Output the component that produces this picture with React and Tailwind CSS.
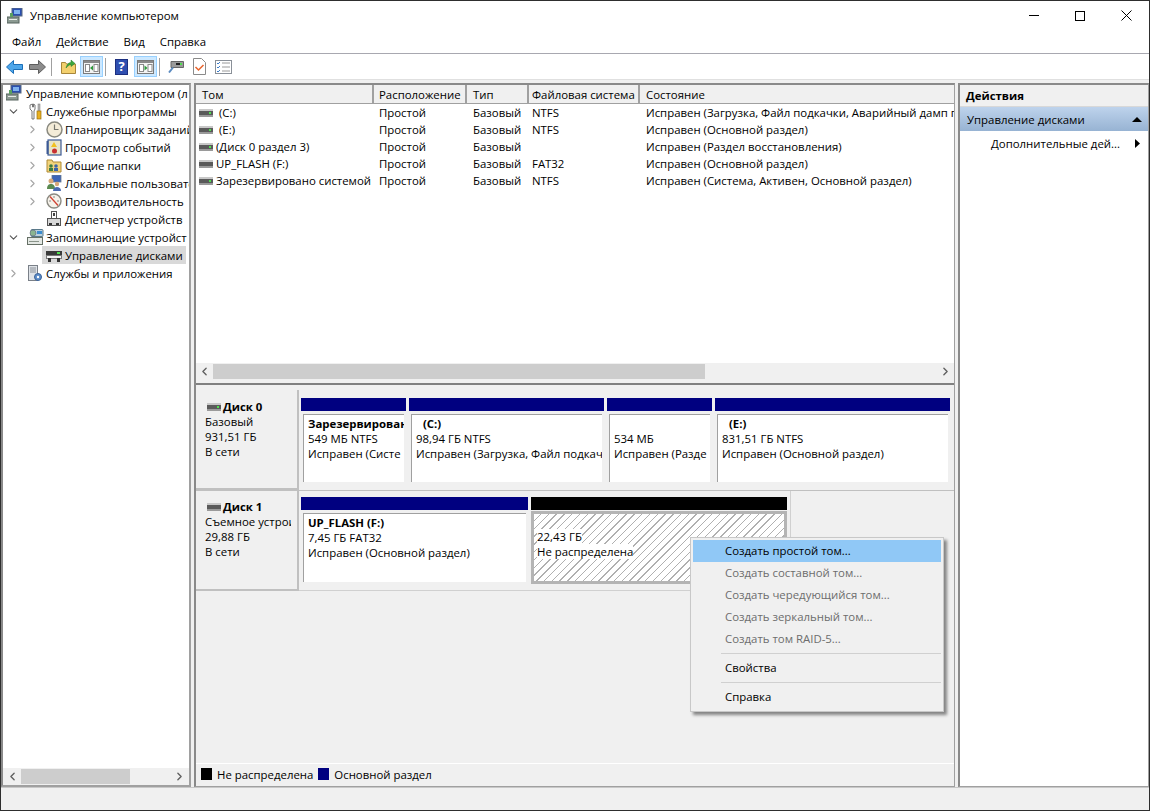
import React from 'react'
import { ChevronDown, ChevronLeft, ChevronRight } from 'lucide-react'

const FONT = "font-['Open_Sans','Noto_Sans',sans-serif]"

// icons
const DriveIcon = ({ flash }) => (
  <svg width="14" height="8" viewBox="0 0 14 8" className="shrink-0">
    <rect x="0" y="0" width="14" height="2" fill="#c8c8c8" />
    <rect x="0" y="2" width="14" height="4" fill="#5a5a5a" />
    <rect x="0" y="6" width="14" height="2" fill="#9a9a9a" />
    {!flash && <rect x="10" y="3" width="2" height="2" fill="#4fe04f" />}
  </svg>
)

const ComputerIcon = () => (
  <svg width="16" height="16" viewBox="0 0 16 16" className="shrink-0">
    <rect x="5" y="0" width="10" height="8" fill="#2a4fb0" stroke="#5a6a80" strokeWidth="1" />
    <rect x="7" y="2" width="6" height="4" fill="#7fb2ee" />
    <rect x="0" y="9" width="12" height="6" fill="#8c9a92" stroke="#55625c" strokeWidth="1" />
    <rect x="2" y="11" width="8" height="1" fill="#e8ece8" />
    <rect x="3" y="5" width="3" height="4" fill="#5aa060" />
  </svg>
)

const ToolsIcon = () => (
  <svg width="16" height="17" viewBox="0 0 16 17" className="shrink-0">
    <path d="M3 2v4l2 2v8h2V8l1-2V2L6.500 1v3h-1V1z" fill="#fff" stroke="#6a6a6a" strokeWidth="0.9" />
    <rect x="11" y="1" width="2" height="8" fill="#b8b8b8" stroke="#777" strokeWidth="0.5" />
    <rect x="10" y="8" width="4" height="8" fill="#e8b020" stroke="#9a7010" strokeWidth="0.7" />
  </svg>
)

const ClockIcon = () => (
  <svg width="17" height="17" viewBox="0 0 17 17" className="shrink-0">
    <circle cx="8.500" cy="8.500" r="7.500" fill="#f4ecd8" stroke="#8a8a80" strokeWidth="1.500" />
    <path d="M8.500 3.500v5h4" fill="none" stroke="#77776e" strokeWidth="1.200" />
  </svg>
)

const EventIcon = () => (
  <svg width="16" height="17" viewBox="0 0 16 17" className="shrink-0">
    <rect x="2" y="1" width="13" height="15" fill="#e8e4c8" stroke="#3c5a96" strokeWidth="1.200" />
    <rect x="0.500" y="2" width="2" height="13" fill="#3c5a96" />
    <path d="M8 3l3 5H5z" fill="#f0c020" />
    <circle cx="8.500" cy="12" r="2.500" fill="#c83030" />
  </svg>
)

const SharedIcon = () => (
  <svg width="16" height="16" viewBox="0 0 16 16" className="shrink-0">
    <path d="M1 3h5l1 2h8v10H1z" fill="#f2d47c" stroke="#b08a34" strokeWidth="1" />
    <circle cx="5" cy="9" r="1.800" fill="#3c7c44" />
    <rect x="3" y="11" width="4" height="3" fill="#3c7c44" />
    <circle cx="10" cy="9" r="1.800" fill="#3c64a8" />
    <rect x="8" y="11" width="4" height="3" fill="#3c64a8" />
  </svg>
)

const UsersIcon = () => (
  <svg width="16" height="16" viewBox="0 0 16 16" className="shrink-0">
    <rect x="6" y="0" width="9" height="7" fill="#3c64b8" stroke="#6a7a90" strokeWidth="0.8" />
    <circle cx="5" cy="6" r="2.500" fill="#d8a878" />
    <path d="M1 14c0-4 2-5 4-5s4 1 4 5z" fill="#5a8a50" />
    <circle cx="11" cy="9" r="2.200" fill="#d8a878" />
    <path d="M7 16c0-3 2-4 4-4s4 1 4 4z" fill="#4a6ab0" />
  </svg>
)

const PerfIcon = () => (
  <svg width="16" height="16" viewBox="0 0 16 16" className="shrink-0">
    <circle cx="8" cy="8" r="7" fill="#f6f2ea" stroke="#8a8a82" strokeWidth="1.400" />
    <path d="M4 3.500l8 9" stroke="#d04030" strokeWidth="1.300" />
    <path d="M8 3v2M3 8h2M11 8h2" stroke="#707070" strokeWidth="0.800" />
  </svg>
)

const DeviceIcon = () => (
  <svg width="14" height="16" viewBox="0 0 14 16" className="shrink-0">
    <rect x="4.500" y="0.500" width="5" height="7" fill="#fff" stroke="#555" />
    <rect x="6" y="2" width="2" height="3" fill="#444" />
    <rect x="0.500" y="7.500" width="13" height="7" fill="#d8d8d8" stroke="#555" />
    <rect x="2" y="12" width="3" height="2" fill="#333" />
    <rect x="9" y="12" width="3" height="2" fill="#333" />
  </svg>
)

const StorageIcon = () => (
  <svg width="17" height="17" viewBox="0 0 17 17" className="shrink-0">
    <rect x="4" y="0.500" width="12" height="7" rx="1" fill="#bcd0dc" stroke="#5a7a8a" />
    <rect x="10" y="2" width="5" height="3" fill="#3c8cd0" />
    <circle cx="6" cy="4" r="3" fill="#8ab490" stroke="#557" strokeWidth="0.500" />
    <rect x="0.500" y="8.500" width="15" height="7" fill="#e4e8e4" stroke="#667066" />
    <rect x="2" y="12" width="10" height="1" fill="#8a948a" />
  </svg>
)

const DiskMgmtIcon = () => (
  <svg width="16" height="13" viewBox="0 0 16 13" className="shrink-0">
    <rect x="0" y="0" width="16" height="2" fill="#dcdcdc" />
    <rect x="0" y="2" width="16" height="4" fill="#3a3a3a" />
    <rect x="11" y="3" width="3" height="2" fill="#50e050" />
    <rect x="0.500" y="6.500" width="15" height="3" fill="#f4f4f4" stroke="#777" />
    <rect x="2" y="9" width="3" height="4" fill="#333" />
    <rect x="11" y="9" width="3" height="4" fill="#333" />
  </svg>
)

const ServicesIcon = () => (
  <svg width="16" height="17" viewBox="0 0 16 17" className="shrink-0">
    <rect x="1.500" y="0.500" width="9" height="15" fill="#dfe3e8" stroke="#7a8088" />
    <path d="M3 3h6M3 5h6M3 7h6" stroke="#8a9098" />
    <circle cx="11" cy="12" r="3.500" fill="#5c8cc8" stroke="#3a6298" />
    <circle cx="11" cy="12" r="1.200" fill="#fff" />
  </svg>
)

const PaneIcon = ({ right }) => (
  <svg width="17" height="14" viewBox="0 0 17 14">
    <rect x="0.500" y="0.500" width="16" height="13" fill="#f4f4f4" stroke="#7a7a7a" />
    <rect x="1" y="1" width="15" height="2" fill="#8a8a8a" />
    <rect x="2.500" y="4.500" width="4" height="7" fill="#fff" stroke="#8a8a8a" />
    <rect x="11" y="4.500" width="4" height="7" fill="#fff" stroke="#8a8a8a" />
    {right ? <path d="M7.500 5.500l3 2.500-3 2.500z" fill="#2f9a3c" /> : <path d="M10 5.500l-3 2.500 3 2.500z" fill="#2f9a3c" />}
  </svg>
)

const Sep = () => <div className="w-px h-[18px] bg-[#a0a0a0]" />

const HotButton = ({ children }) => (
  <div className="w-[23px] h-[21px] flex items-center justify-center bg-[#cce8ff] border border-[#99d1ff]">{children}</div>
)

function Toolbar() {
  return (
    <div className="h-[25px] flex items-center bg-white pl-[5px]">
      <svg width="17" height="14" viewBox="0 0 17 14">
        <path d="M7.500 0.500L0.500 7l7 6.500V9.500h9v-5h-9z" fill="#4da6ea" stroke="#1c6fb8" />
      </svg>
      <svg width="17" height="14" viewBox="0 0 17 14" className="ml-[6px]">
        <path d="M9.500 0.500L16.500 7l-7 6.500V9.500h-9v-5h9z" fill="#8c8c8c" stroke="#5e5e5e" />
      </svg>
      <div className="ml-[5px]"><Sep /></div>
      <svg width="15" height="15" viewBox="0 0 15 15" className="ml-[9px]">
        <path d="M0.500 3.500h4l1 1.500h9v9.500H0.500z" fill="#f3d06e" stroke="#a8863a" />
        <path d="M5 9C6 5 8 3.500 10 3.500V1l4 3.500-4 3V5.500C8.500 5.500 7 7 5 9z" fill="#3da83d" stroke="#22782a" strokeWidth="0.500" />
      </svg>
      <div className="ml-[4px]"><HotButton><PaneIcon /></HotButton></div>
      <div className="ml-[2px]"><Sep /></div>
      <div className="ml-[9px] w-[13px] h-[16px] flex items-center justify-center bg-[#2f4fb0] border border-[#1c2f80] text-white font-bold text-[13px] leading-none">?</div>
      <div className="ml-[6px]"><HotButton><PaneIcon right /></HotButton></div>
      <div className="ml-[2px]"><Sep /></div>
      <svg width="16" height="12" viewBox="0 0 16 12" className="ml-[8px]">
        <path d="M3 0.500h12.500v6H3z" fill="#9a9a9a" stroke="#666" />
        <rect x="8" y="2" width="6" height="2" fill="#222" />
        <rect x="12" y="2" width="2" height="2" fill="#4fe04f" />
        <path d="M5 6.500l-4 5" stroke="#5a8ac0" strokeWidth="2" />
      </svg>
      <svg width="13" height="17" viewBox="0 0 13 17" className="ml-[9px]">
        <path d="M0.500 0.500h8l4 4v12H0.500z" fill="#fff" stroke="#8a8a8a" />
        <path d="M2.500 9l3 3 5-5" fill="none" stroke="#e8642c" strokeWidth="1.500" />
      </svg>
      <svg width="17" height="14" viewBox="0 0 17 14" className="ml-[9px]">
        <rect x="0.500" y="0.500" width="16" height="13" fill="#fff" stroke="#8a9098" />
        <path d="M2 3l1 1 2-2M2 7l1 1 2-2M2 11l1 1 2-2" fill="none" stroke="#3c7cc8" />
        <path d="M7 3h8M7 7h8M7 11h8" stroke="#9a9a9a" />
      </svg>
    </div>
  )
}

const Arrow = ({ open }) =>
  open ? (
    <ChevronDown size={13} strokeWidth={2} className="text-[#555] shrink-0" />
  ) : (
    <ChevronRight size={13} strokeWidth={2} className="text-[#a6a6a6] shrink-0" />
  )

function TreeRow({ level, arrow, open, icon, label, selected }) {
  const pad = level === 0 ? 'pl-[3px]' : level === 1 ? 'pl-[4px]' : 'pl-[23px]'
  const inner = selected ? 'ml-[3px] pl-[4px] pr-[3px] bg-[#d9d9d9]' : level > 0 ? 'ml-[7px]' : ''
  return (
    <div className={`h-[18px] flex items-center ${pad} whitespace-nowrap`}>
      {level > 0 && <div className="w-[13px] flex justify-center shrink-0">{arrow && <Arrow open={open} />}</div>}
      <div className={`flex items-center h-[18px] ${inner}`}>
        <div className="w-[16px] flex justify-center shrink-0">{icon}</div>
        <span className={level === 0 ? 'ml-[4px]' : 'ml-[3px]'}>{label}</span>
      </div>
    </div>
  )
}

function Scroll({ thumbClass, leftPad }) {
  return (
    <div className={`h-[17px] flex items-center bg-[#f0f0f0] ${leftPad}`}>
      <ChevronLeft size={13} strokeWidth={2.500} className="text-[#606060] shrink-0" />
      <div className="flex-1 h-[15px] mx-[2px]">
        <div className={`h-full bg-[#cdcdcd] ${thumbClass}`} />
      </div>
      <ChevronRight size={13} strokeWidth={2.500} className="text-[#606060] shrink-0" />
    </div>
  )
}

function TreePanel() {
  return (
    <div className="w-[190px] shrink-0 h-full bg-white border-2 border-[#a0a0a0] border-t-[#8a8a8a] border-l-[#8a8a8a] flex flex-col overflow-hidden">
      <div className="flex-1 -mt-[1px]">
        <TreeRow level={0} icon={<ComputerIcon />} label="Управление компьютером (л" />
        <TreeRow level={1} arrow open icon={<ToolsIcon />} label="Служебные программы" />
        <TreeRow level={2} arrow icon={<ClockIcon />} label="Планировщик заданий" />
        <TreeRow level={2} arrow icon={<EventIcon />} label="Просмотр событий" />
        <TreeRow level={2} arrow icon={<SharedIcon />} label="Общие папки" />
        <TreeRow level={2} arrow icon={<UsersIcon />} label="Локальные пользовате" />
        <TreeRow level={2} arrow icon={<PerfIcon />} label="Производительность" />
        <TreeRow level={2} icon={<DeviceIcon />} label="Диспетчер устройств" />
        <TreeRow level={1} arrow open icon={<StorageIcon />} label="Запоминающие устройст" />
        <TreeRow level={2} icon={<DiskMgmtIcon />} label="Управление дисками" selected />
        <TreeRow level={1} arrow icon={<ServicesIcon />} label="Службы и приложения" />
      </div>
      <Scroll thumbClass="w-[109px]" leftPad="px-[3px]" />
    </div>
  )
}

const columns = ['Том', 'Расположение', 'Тип', 'Файловая система', 'Состояние']
const colW = ['w-[178px]', 'w-[93px]', 'w-[62px]', 'w-[111px]', 'flex-1']
const headPad = ['pl-[6px]', 'pl-[5px]', 'pl-[6px]', 'pl-[3px]', 'pl-[6px]']

const rows = [
  { vol: '(C:)', gap: true, type: 'Базовый', fs: 'NTFS', state: 'Исправен (Загрузка, Файл подкачки, Аварийный дамп п' },
  { vol: '(E:)', gap: true, type: 'Базовый', fs: 'NTFS', state: 'Исправен (Основной раздел)' },
  { vol: '(Диск 0 раздел 3)', type: 'Базовый', fs: '', state: 'Исправен (Раздел восстановления)' },
  { vol: 'UP_FLASH (F:)', flash: true, type: 'Базовый', fs: 'FAT32', state: 'Исправен (Основной раздел)' },
  { vol: 'Зарезервировано системой', type: 'Базовый', fs: 'NTFS', state: 'Исправен (Система, Активен, Основной раздел)' },
]

function VolumeList() {
  return (
    <div className="h-[295px] bg-white flex flex-col">
      <div className="h-[19px] flex bg-[#f0f0f0] border-b border-[#a0a0a0] shrink-0">
        {columns.map((c, i) => (
          <div key={c} className={`${colW[i]} h-full border-r-2 border-[#a0a0a0] last:border-r-0 ${headPad[i]} leading-[19px] overflow-hidden whitespace-nowrap`}>
            {c}
          </div>
        ))}
      </div>
      <div className="flex-1">
        {rows.map((r) => (
          <div key={r.vol} className="h-[17px] flex items-center whitespace-nowrap">
            <div className={`${colW[0]} flex items-center pl-[3px] overflow-hidden`}>
              <DriveIcon flash={r.flash} />
              <span className={r.gap ? 'ml-[6px]' : 'ml-[3px]'}>{r.vol}</span>
            </div>
            <div className={`${colW[1]} pl-[5px]`}>Простой</div>
            <div className={`${colW[2]} pl-[6px]`}>{r.type}</div>
            <div className={`${colW[3]} pl-[3px]`}>{r.fs}</div>
            <div className={`${colW[4]} pl-[6px] overflow-hidden`}>{r.state}</div>
          </div>
        ))}
      </div>
      <Scroll thumbClass="w-[492px]" leftPad="pl-[2px] pr-[2px]" />
    </div>
  )
}

function Volume({ w, bar = 'bg-[#000080]', title, lines, selected, titleIndent }) {
  return (
    <div className={`${w} shrink-0 flex flex-col mr-[3px]`}>
      <div className={`h-[13px] ${bar}`} />
      <div className={`flex-1 mt-[1px] ${selected ? 'border-[3px] border-[#b4b4b4]' : 'border-2 border-[#f0f0f0] bg-white'}`}>
        <div className={`h-full whitespace-nowrap overflow-hidden leading-[15px] ${selected ? 'pl-[3px] bg-[repeating-linear-gradient(135deg,#ffffff_0,#ffffff_4.500px,#b0b0b0_4.500px,#b0b0b0_5.500px)]' : 'pl-[4px] pt-[1px] border-t border-l border-[#a0a0a0] bg-white'}`}>
          <div className={`h-[15px] font-bold ${titleIndent ? 'pl-[7px]' : ''}`}>{title}</div>
          {lines.map((l) => (
            <div key={l} className="h-[15px]"><span className={selected ? 'bg-white' : ''}>{l}</span></div>
          ))}
        </div>
      </div>
    </div>
  )
}

function DiskLabel({ name, flash, lines, topPad }) {
  return (
    <div className={`w-[103px] shrink-0 h-full bg-[#f0f0f0] border-r-2 border-b-2 border-[#c0c0c0] pl-[9px] ${topPad} leading-[15px] whitespace-nowrap`}>
      <div className="w-[86px] overflow-hidden">
        <div className="flex items-center h-[15px] pl-[2px] font-bold">
          <DriveIcon flash={flash} />
          <span className="ml-[2px]">{name}</span>
        </div>
        {lines.map((l) => <div key={l} className="h-[15px]">{l}</div>)}
      </div>
    </div>
  )
}

function DiskPane() {
  return (
    <div className="flex-1 flex flex-col bg-[#f0f0f0] border-t-2 border-[#808080] mt-[3px] relative">
      <div className="h-[5px]" />
      <div className="h-[101px] flex border-b border-[#c0c0c0]">
        <DiskLabel name="Диск 0" topPad="pt-[9px]" lines={['Базовый', '931,51 ГБ', 'В сети']} />
        <div className="flex pl-[2px] pt-[8px] pb-[6px]">
          <Volume w="w-[105px]" title="Зарезервирован" lines={['549 МБ NTFS', 'Исправен (Систе']} />
          <Volume w="w-[195px]" title="(C:)" titleIndent lines={['98,94 ГБ NTFS', 'Исправен (Загрузка, Файл подкач']} />
          <Volume w="w-[105px]" title="" lines={['534 МБ', 'Исправен (Разде']} />
          <Volume w="w-[235px]" title="(E:)" titleIndent lines={['831,51 ГБ NTFS', 'Исправен (Основной раздел)']} />
        </div>
      </div>
      <div className="h-[100px] flex">
        <DiskLabel name="Диск 1" flash topPad="pt-[8px]" lines={['Съемное устрои', '29,88 ГБ', 'В сети']} />
        <div className="flex pl-[2px] pt-[6px] pb-[6px] border-r border-b border-[#d0d0d0]">
          <Volume w="w-[227px]" title="UP_FLASH  (F:)" lines={['7,45 ГБ FAT32', 'Исправен (Основной раздел)']} />
          <Volume w="w-[256px]" bar="bg-black" title="" lines={['22,43 ГБ', 'Не распределена']} selected />
        </div>
      </div>
      <div className="flex-1" />
      <div className="h-[21px] mb-[2px] flex items-center bg-[#f0f0f0] border-t border-white pl-[5px]">
        <div className="w-[11px] h-[12px] bg-black" />
        <span className="ml-[5px]">Не распределена</span>
        <div className="ml-[5px] w-[11px] h-[12px] bg-[#000080]" />
        <span className="ml-[5px]">Основной раздел</span>
      </div>
    </div>
  )
}

function ActionsPanel() {
  return (
    <div className="flex-1 h-full bg-white border-t-2 border-l-2 border-[#8a8a8a] border-r border-r-[#a0a0a0] border-b border-b-[#a0a0a0]">
      <div className="h-[21px] bg-[#f0f0f0] pl-[6px] font-bold leading-[21px]">Действия</div>
      <div className="h-[25px] flex items-center pl-[7px] pr-[6px] bg-gradient-to-b from-[#bed3ec] to-[#97b3d3] border-t border-[#d8d8d8]">
        <span>Управление дисками</span>
        <svg width="10" height="5" viewBox="0 0 10 5" className="ml-auto"><path d="M5 0l5 5H0z" fill="#000" /></svg>
      </div>
      <div className="h-[24px] flex items-center pl-[31px] pr-[8px]">
        <span>Дополнительные дей...</span>
        <svg width="5" height="9" viewBox="0 0 5 9" className="ml-auto"><path d="M0 0l5 4.500L0 9z" fill="#000" /></svg>
      </div>
    </div>
  )
}

function ContextMenu() {
  const disabled = ['Создать составной том...', 'Создать чередующийся том...', 'Создать зеркальный том...', 'Создать том RAID-5...']
  return (
    <div className="absolute left-[689px] top-[536px] w-[254px] h-[175px] bg-[#f0f0f0] border border-[#c8c8c8] p-[2px] shadow-[3px_3px_3px_rgba(0,0,0,0.45)]">
      <div className="h-[22px] bg-[#90c8f6] pl-[32px] leading-[22px]">Создать простой том...</div>
      {disabled.map((d) => (
        <div key={d} className="h-[22px] pl-[32px] leading-[22px] text-[#6d6d6d]">{d}</div>
      ))}
      <div className="h-[7px] ml-[28px] flex items-center"><div className="w-full h-px bg-[#d0d0d0]" /></div>
      <div className="h-[22px] pl-[32px] leading-[22px]">Свойства</div>
      <div className="h-[7px] ml-[28px] flex items-center"><div className="w-full h-px bg-[#d0d0d0]" /></div>
      <div className="h-[22px] pl-[32px] leading-[22px]">Справка</div>
    </div>
  )
}

export default function App() {
  return (
    <div className={`${FONT} relative w-[1150px] h-[811px] overflow-hidden flex flex-col bg-white border border-[#2e2e2e] text-[11.4px] leading-[17px] text-black`}>
      <div className="h-[29px] flex items-center pl-[6px] shrink-0">
        <ComputerIcon />
        <span className="ml-[7px]">Управление компьютером</span>
        <div className="ml-auto flex items-center">
          <div className="w-[46px] h-[29px] flex items-center justify-center"><div className="w-[10px] h-px bg-black" /></div>
          <div className="w-[46px] h-[29px] flex items-center justify-center"><div className="w-[10px] h-[10px] border border-black" /></div>
          <div className="w-[46px] h-[29px] flex items-center justify-center">
            <svg width="11" height="11" viewBox="0 0 11 11"><path d="M0.500 0.500l10 10M10.500 0.500l-10 10" stroke="#000" strokeWidth="1" /></svg>
          </div>
        </div>
      </div>
      <div className="h-[24px] pb-[1px] flex items-center pl-[11px] gap-[15px] border-b border-[#a8a8b0] shrink-0">
        <span>Файл</span>
        <span>Действие</span>
        <span>Вид</span>
        <span>Справка</span>
      </div>
      <Toolbar />
      <div className="flex-1 bg-[#f0f0f0] flex pt-[3px] min-h-0 border-t border-[#e0e0e0]">
        <TreePanel />
        <div className="w-[761px] ml-[3px] shrink-0 h-full flex flex-col border-t-2 border-l-2 border-[#8a8a8a] border-r border-r-[#a0a0a0] border-b border-b-[#a0a0a0]">
          <VolumeList />
          <DiskPane />
        </div>
        <div className="w-[3px] shrink-0" />
        <ActionsPanel />
      </div>
      <div className="h-[23px] bg-[#f0f0f0] border-t border-[#c8c8c8] shrink-0" />
      <ContextMenu />
    </div>
  )
}
